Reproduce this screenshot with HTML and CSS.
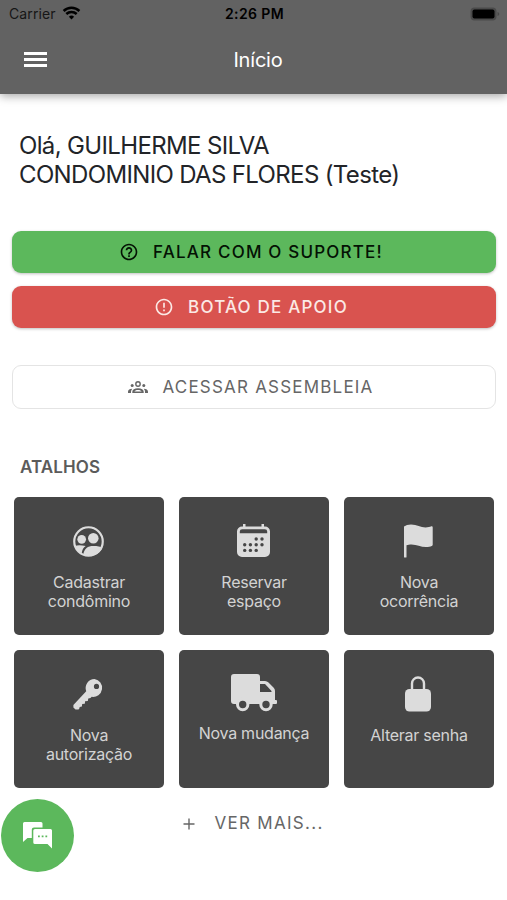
FILE: index.html
```html
<!DOCTYPE html>
<html lang="pt-BR">
<head>
    <meta charset="UTF-8">
    <meta name="viewport" content="width=device-width, initial-scale=1.0">
    <title>Início</title>
    <link rel="stylesheet" href="styles.css">
</head>
<body>
    <header class="header">
        <div class="status-bar">
            <div class="carrier">
                <span>Carrier</span>
                <svg class="wifi" viewBox="0 0 18 14">
                    <path d="M9 13.5 6.4 10.7a3.8 3.8 0 0 1 5.2 0z" fill="#000"/>
                    <path d="M3.8 8a7.5 7.5 0 0 1 10.4 0M1.1 5a11.4 11.4 0 0 1 15.8 0" fill="none" stroke="#000" stroke-width="2.5"/>
                </svg>
            </div>
            <span class="time">2:26 PM</span>
            <div class="battery-wrap">
                <svg class="battery" viewBox="0 0 30 14">
                    <rect x=".5" y=".5" width="26" height="13" rx="4" fill="#4a4a4a"/>
                    <rect x="2.5" y="2.5" width="22" height="9" rx="2" fill="#000"/>
                    <path d="M27.5 5v4q1.8-.6 1.8-2t-1.8-2z" fill="#4a4a4a"/>
                </svg>
            </div>
        </div>
        <div class="toolbar">
            <button class="menu-button" aria-label="Menu">
                <span></span>
                <span></span>
                <span></span>
            </button>
            <h1 class="title">Início</h1>
        </div>
    </header>

    <main class="content">
        <div class="greeting">
            <p class="user-name">Olá, GUILHERME SILVA</p>
            <p class="condo-name">CONDOMINIO DAS FLORES (Teste)</p>
        </div>

        <div class="actions">
            <button class="btn btn-success">
                <svg class="btn-icon" viewBox="0 0 24 24">
                    <path d="M11 18h2v-2h-2v2zm1-16C6.48 2 2 6.48 2 12s4.48 10 10 10 10-4.48 10-10S17.52 2 12 2zm0 18c-4.41 0-8-3.59-8-8s3.59-8 8-8 8 3.59 8 8-3.59 8-8 8zm0-14c-2.21 0-4 1.79-4 4h2c0-1.1.9-2 2-2s2 .9 2 2c0 2-3 1.75-3 5h2c0-2.25 3-2.5 3-5 0-2.21-1.79-4-4-4z"/>
                </svg>
                <span>FALAR COM O SUPORTE!</span>
            </button>
            <button class="btn btn-danger">
                <svg class="btn-icon" viewBox="0 0 24 24">
                    <path d="M11 15h2v2h-2zm0-8h2v6h-2zm1-5C6.48 2 2 6.48 2 12s4.48 10 10 10 10-4.48 10-10S17.52 2 12 2zm0 18c-4.42 0-8-3.58-8-8s3.58-8 8-8 8 3.58 8 8-3.58 8-8 8z"/>
                </svg>
                <span>BOTÃO DE APOIO</span>
            </button>
            <button class="btn btn-outline">
                <svg class="btn-icon" viewBox="0 0 20 20">
                    <circle cx="10" cy="7" r="2.2" fill="none" stroke="currentColor" stroke-width="1.4"/>
                    <circle cx="4.2" cy="8.4" r="1.5"/>
                    <circle cx="15.8" cy="8.4" r="1.5"/>
                    <path d="M4.300 16v-1.300C4.300 12.600 6.500 11.200 10 11.200s5.700 1.400 5.700 3.500V16zm2.100-1.400h7.200c-.4-1.100-1.700-1.700-3.600-1.700s-3.200.6-3.600 1.700z" fill-rule="evenodd"/>
                    <path d="M0 16v-1.300C0 13 1.600 11.800 4.300 11.800 3.500 12.700 3 13.600 3 14.700V16zM20 16v-1.300c0-1.700-1.600-2.900-4.300-2.900.8.9 1.300 1.800 1.300 2.900V16z"/>
                </svg>
                <span>ACESSAR ASSEMBLEIA</span>
            </button>
        </div>

        <h2 class="section-title">ATALHOS</h2>

        <div class="shortcuts">
            <a class="card">
                <span class="card-icon">
                    <svg width="31" height="31" viewBox="2 2 20 20">
                        <circle cx="12" cy="12" r="9.2" fill="none" stroke="#dcdcdc" stroke-width="1.4"/>
                        <circle cx="7.6" cy="10.6" r="2.8"/>
                        <circle cx="15.1" cy="9.9" r="3.4"/>
                        <path d="M3 15c1.800-.7 4-.7 7.200-.1-1.500 1-2.200 2.300-2.600 4.600C5.500 18.800 3.800 17 3 15zM8.600 20.400c.7-3.900 2.900-5.500 6.500-5.500 2.700 0 4.700.4 6 1-1.600 4-7 7-12.500 4.500z"/>
                    </svg>
                </span>
                <span class="card-label">Cadastrar<br>condômino</span>
            </a>
            <a class="card">
                <span class="card-icon">
                    <svg width="33" height="34" viewBox="0 0 33 34">
                        <path fill-rule="evenodd" d="M6 0h2.500v2.500h16V0H27v2.500h1a5 5 0 0 1 5 5V28a5 5 0 0 1-5 5H5a5 5 0 0 1-5-5V7.500a5 5 0 0 1 5-5h1zM2.800 9.300h27.400V7.600a2.400 2.400 0 0 0-2.400-2.400H5.200a2.400 2.400 0 0 0-2.400 2.400z"/>
                        <g fill="#464646">
                            <circle cx="19.2" cy="15" r="1.7"/>
                            <circle cx="25" cy="15" r="1.7"/>
                            <circle cx="7.7" cy="20.7" r="1.7"/>
                            <circle cx="13.4" cy="20.7" r="1.7"/>
                            <circle cx="19.2" cy="20.7" r="1.7"/>
                            <circle cx="25" cy="20.7" r="1.7"/>
                            <circle cx="7.7" cy="26.4" r="1.7"/>
                            <circle cx="13.4" cy="26.4" r="1.7"/>
                            <circle cx="19.2" cy="26.4" r="1.7"/>
                        </g>
                    </svg>
                </span>
                <span class="card-label">Reservar<br>espaço</span>
            </a>
            <a class="card">
                <span class="card-icon">
                    <svg width="29" height="34" viewBox="0 0 29 34">
                        <path d="M0 2.500Q2.500.5 7 .5c6 0 9.500 3 14.500 3 2.500 0 4.500-.7 5.800-1.200.8-.3 1.400.1 1.400.9v17.500c0 .6-.3 1-1 1.300-1.300.5-3.300 1.100-5.700 1.100-5.500 0-9-2.600-14.500-2.600-2 0-3.500.3-5 .8V33q0 .5-.5.5H.5Q0 33.500 0 33z"/>
                    </svg>
                </span>
                <span class="card-label">Nova<br>ocorrência</span>
            </a>
            <a class="card">
                <span class="card-icon">
                    <svg width="31" height="31" viewBox="0 0 31 31">
                        <path fill-rule="evenodd" d="M21.500 0a9 9 0 1 1-2.800 17.800l-1.200 1.300-2.200.3-.5 2.600-2.700.2-.3 2.600-2.600.2-.3 2.500-2.200.4-.4 1.600q-.2 1-1.200 1H2.500L.4 28.400V26L13.200 12.200A9 9 0 0 1 21.500 0zm2 4.800a2.600 2.600 0 1 0 0 5.200 2.600 2.600 0 0 0 0-5.200z"/>
                    </svg>
                </span>
                <span class="card-label">Nova<br>autorização</span>
            </a>
            <a class="card">
                <span class="card-icon card-icon-truck">
                    <svg width="46" height="38" viewBox="0 0 46 38">
                        <path fill-rule="evenodd" d="M3 0h23a3 3 0 0 1 3 3v4h5q2 0 3.500 1.500l5.200 5.200Q44 15.300 44 17v9h1q1 0 1 1v2q0 1-1 1H3a3 3 0 0 1-3-3V3a3 3 0 0 1 3-3zm26 10v8h11.500v-1L34 10z"/>
                        <circle class="wheel" cx="11.7" cy="30.5" r="5.2"/>
                        <circle class="wheel" cx="35" cy="30.5" r="5.2"/>
                    </svg>
                </span>
                <span class="card-label">Nova mudança</span>
            </a>
            <a class="card">
                <span class="card-icon card-icon-lock">
                    <svg width="26" height="36" viewBox="0 0 26 36">
                        <rect x="0" y="13" width="26" height="22.5" rx="4.5"/>
                        <path d="M7 14V7.500a6 6 0 0 1 12 0V14" fill="none" stroke="#dcdcdc" stroke-width="2.4"/>
                    </svg>
                </span>
                <span class="card-label">Alterar senha</span>
            </a>
        </div>

        <button class="more">
            <svg width="12" height="12" viewBox="0 0 12 12">
                <path d="M6 .5v11M.5 6h11" stroke="#666" stroke-width="1.4"/>
            </svg>
            <span>VER MAIS...</span>
        </button>
    </main>

    <button class="chat" aria-label="Chat">
        <svg width="30" height="27" viewBox="0 0 30 27">
            <path d="M1.500 0H18q1.500 0 1.500 1.500V5.500H11Q8.800 5.500 8.800 7.500V16H4.500L0 20V1.500Q0 0 1.500 0z"/>
            <path fill-rule="evenodd" d="M12 7h15.500Q29 7 29 8.500V26.500L24.500 22H12q-1.700 0-1.700-1.500v-12Q10.300 7 12 7zM15 13.500v1.800h1.800v-1.800zm3.700 0v1.800h1.800v-1.800zm3.700 0v1.800h1.800v-1.800z"/>
        </svg>
    </button>
</body>
</html>
```

FILE: styles.css
```css
* {
    box-sizing: border-box;
}
body {
    margin: 0;
    min-height: 900px;
    background-color: #fff;
    font-family: 'Inter', 'Liberation Sans', sans-serif;
    color: #222428;
}
button {
    border: 0;
    padding: 0;
    background: none;
    font-family: inherit;
}
h1, h2, p {
    margin: 0;
    font-weight: 400;
}

/* header */
.header {
    height: 94px;
    background-color: #626262;
    box-shadow: 0 2px 9px rgba(0, 0, 0, 0.36);
}
.status-bar {
    display: grid;
    grid-template-columns: 1fr auto 1fr;
    align-items: center;
    height: 27px;
    padding: 0 7px 0 9px;
    color: #000;
    font-size: 14px;
}
.carrier {
    display: flex;
    align-items: center;
    gap: 6px;
    color: #161616;
    letter-spacing: 0.1px;
}
.wifi {
    width: 19px;
    height: 14px;
    margin-top: -2px;
}
.time {
    font-weight: 600;
    letter-spacing: 0.4px;
}
.battery-wrap {
    display: flex;
    justify-content: flex-end;
}
.battery {
    width: 30px;
    height: 14px;
}
.toolbar {
    display: grid;
    grid-template-columns: 1fr auto 1fr;
    align-items: center;
    height: 66px;
    padding: 0 20px 0 24px;
}
.menu-button {
    display: flex;
    flex-direction: column;
    gap: 3px;
    width: 23px;
    margin-bottom: 2px;
}
.menu-button span {
    height: 3px;
    background-color: #fff;
}
.title {
    padding-left: 5px;
    color: #fff;
    font-size: 20px;
    letter-spacing: -0.2px;
}

/* greeting */
.content {
    padding: 37px 11px 0 12px;
}
.greeting {
    padding-left: 7px;
    font-size: 24px;
    line-height: 29px;
    letter-spacing: -0.65px;
}

/* buttons */
.actions {
    display: flex;
    flex-direction: column;
    gap: 13px;
    margin-top: 42px;
}
.btn {
    display: flex;
    align-items: center;
    justify-content: center;
    gap: 14px;
    height: 42px;
    padding-right: 6px;
    border-radius: 9px;
    font-size: 17px;
    font-weight: 500;
    letter-spacing: 1.2px;
}
.btn-icon {
    width: 20px;
    height: 20px;
    fill: currentColor;
}
.btn-success {
    background-color: #5cb85c;
    color: #041204;
    box-shadow: 0 1px 3px rgba(0, 0, 0, 0.25);
}
.btn-danger {
    background-color: #d9534f;
    color: #fbe9e5;
    box-shadow: 0 1px 3px rgba(0, 0, 0, 0.25);
}
.btn-outline {
    height: 44px;
    margin-top: 24px;
    border: 1px solid #e4e4e4;
    background-color: #fff;
    color: #666;
    font-weight: 400;
}

/* shortcuts */
.section-title {
    margin: 48px 0 0 8px;
    color: #5b5b5b;
    font-size: 17px;
    font-weight: 600;
    line-height: 20px;
    letter-spacing: 0.1px;
}
.shortcuts {
    display: grid;
    grid-template-columns: repeat(3, 150px);
    gap: 15px;
    margin: 20px 0 0 2px;
}
.card {
    display: flex;
    flex-direction: column;
    align-items: center;
    height: 138px;
    padding-top: 22px;
    border-radius: 5px;
    background-color: #464646;
    color: #d3d3d3;
    text-align: center;
}
.card-icon {
    display: flex;
    align-items: center;
    justify-content: center;
    height: 44px;
    padding-right: 2px;
    fill: #dcdcdc;
}
.card-icon-truck {
    height: 42px;
    padding-right: 0;
}
.card-icon-lock {
    padding-right: 3px;
}
.wheel {
    fill: #464646;
    stroke: #dcdcdc;
    stroke-width: 3px;
}
.card-label {
    margin-top: 10px;
    font-size: 16px;
    line-height: 19px;
    letter-spacing: -0.25px;
}

/* footer */
.more {
    display: flex;
    align-items: center;
    justify-content: center;
    gap: 19px;
    width: 100%;
    margin-top: 25px;
    padding-right: 1px;
    color: #666;
    font-size: 17px;
    line-height: 21px;
    letter-spacing: 1.3px;
}
.chat {
    position: fixed;
    left: 1px;
    top: 799px;
    display: flex;
    align-items: center;
    justify-content: center;
    width: 73px;
    height: 73px;
    border-radius: 50%;
    background-color: #5cb85c;
    fill: #fff;
}
```
